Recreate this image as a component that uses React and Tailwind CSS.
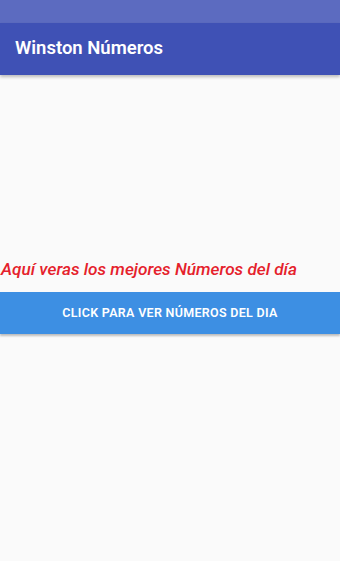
export default function App() {
  return (
    <div className="w-[340px] h-[561px] bg-[#fafafa] flex flex-col" style={{ fontFamily: 'Roboto, "Liberation Sans", sans-serif' }}>
      {/* status bar */}
      <div className="h-[23px] bg-[#5c6bc0]" />
      {/* app bar */}
      <div className="h-[52px] bg-[#3f51b5] flex items-center px-[15px] shadow-[0_2px_3px_rgba(0,0,0,0.25)] z-10">
        <h1 className="text-white text-[18.5px] font-semibold">Winston Números</h1>
      </div>
      <div className="h-[181px]" />
      <p className="text-[#e5212b] italic font-medium text-[17.2px] leading-[26px] pl-[1px] whitespace-nowrap">
        Aquí veras los mejores Números del día
      </p>
      <button className="mt-[10px] h-[42px] w-full bg-[#3d8fe3] text-white text-[12.5px] tracking-[0.3px] font-semibold uppercase shadow-[0_2px_2px_rgba(0,0,0,0.25)]">
        Click para ver números del dia
      </button>
    </div>
  );
}
